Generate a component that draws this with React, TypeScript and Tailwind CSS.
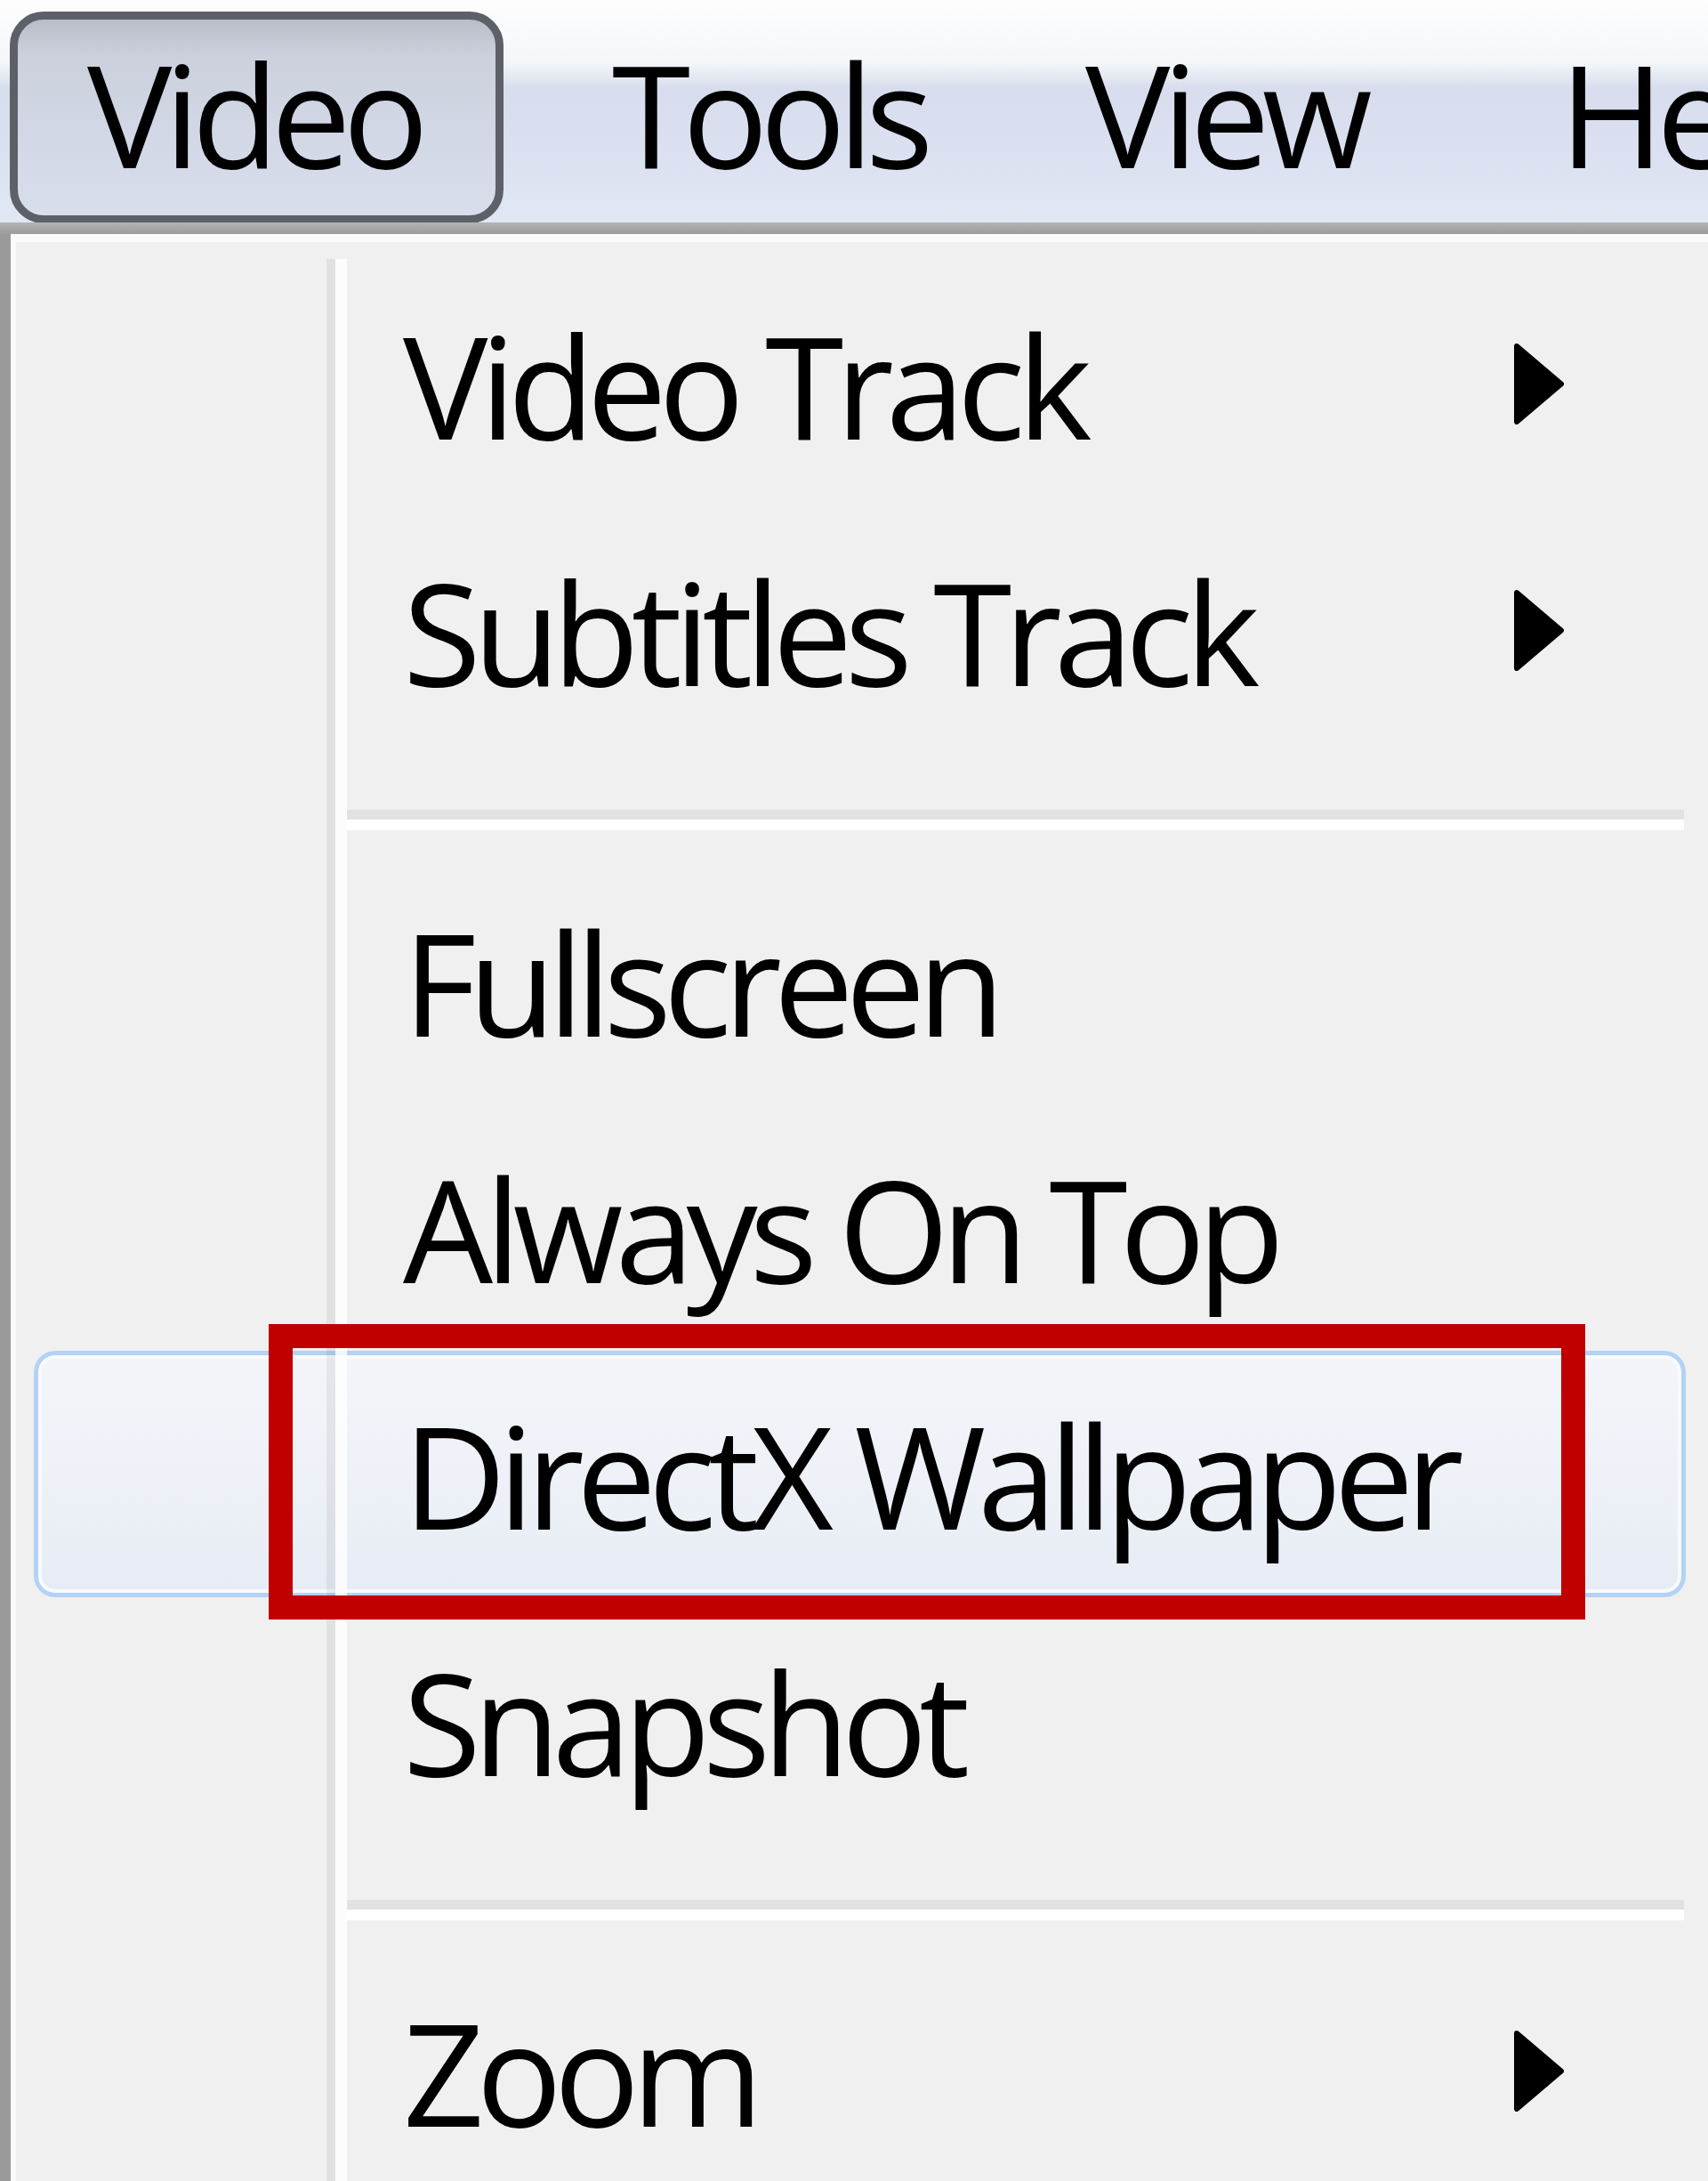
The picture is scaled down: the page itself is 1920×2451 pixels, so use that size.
import React from 'react';

const font = "font-['Open_Sans',sans-serif]";
const label = 'text-[160px] leading-none tracking-[-9px] text-black whitespace-nowrap';

const Arrow = () => (
  <svg width="56" height="91" viewBox="0 0 56 91" className="block">
    <path d="M3 3 L53 45.5 L3 88 Z" fill="#000" stroke="#000" strokeWidth="6" strokeLinejoin="round" />
  </svg>
);

const MenuRow = ({ text, submenu = false, active = false, marked = false }) => (
  <div
    className={`relative flex h-[277px] items-center pl-[415px] pr-[137px] ${
      active
        ? 'rounded-[24px] bg-[linear-gradient(to_bottom,#f3f5f9_0%,#eef1f7_50%,#e6ecf5_100%)] shadow-[inset_0_0_0_5px_#b3d2f5,inset_0_0_0_9px_#f8fafd]'
        : ''
    }`}
  >
    <span className={label}>{text}</span>
    {submenu && (
      <div className="ml-auto">
        <Arrow />
      </div>
    )}
    {marked && (
      <div className="absolute left-[264px] top-[-30px] z-20 h-[332px] w-[1480px] border-[27px] border-[#c00000]" />
    )}
  </div>
);

const Separator = () => (
  <div className="ml-[352px] mr-[2px] h-[117px] pt-[63px]">
    <div className="h-[11px] bg-[#e2e2e2]" />
    <div className="h-[12px] bg-white" />
  </div>
);

const BarItem = ({ text, width }) => (
  <div className={`mt-[13px] flex h-[238px] shrink-0 items-center pb-[10px] ${width}`}>
    <span className={label}>{text}</span>
  </div>
);

export default function App() {
  return (
    <div className={`h-[2451px] w-[1920px] overflow-hidden bg-[#f0f0f0] ${font}`}>
      {/* menu bar */}
      <div className="flex h-[250px] items-start overflow-hidden bg-[linear-gradient(to_bottom,#fefefe_0%,#f4f6fa_28%,#d7dded_40%,#dbe1f0_70%,#e2e7f4_100%)]">
        <div className="ml-[11px] mt-[13px] flex h-[238px] w-[555px] shrink-0 items-center rounded-[38px] border-[9px] border-[#5d6068] bg-[linear-gradient(to_bottom,#b9bdc7_0%,#cbd0dc_18%,#d1d6e4_50%,#d9deec_100%)] pb-[10px] pl-[78px]">
          <span className={label}>Video</span>
        </div>
        <div className="w-[122px] shrink-0" />
        <BarItem text="Tools" width="w-[532px]" />
        <BarItem text="View" width="w-[533px]" />
        <BarItem text="Help" width="w-[400px]" />
      </div>
      <div className="h-[13px] bg-[linear-gradient(to_bottom,#b4b4b4,#9c9c9c)]" />

      {/* dropdown */}
      <div className="relative h-full border-l-[12px] border-l-[#9a9a9a] bg-[#f0f0f0] pl-[26px] pr-[25px] pt-[30px] shadow-[inset_6px_9px_0_0_#fafafa]">
        <div className="absolute bottom-0 left-[355px] top-[28px] z-10 flex w-[23px]">
          <div className="w-[10px] bg-black/[0.06]" />
          <div className="w-[13px] bg-white/80" />
        </div>
        <MenuRow text="Video Track" submenu />
        <MenuRow text="Subtitles Track" submenu />
        <Separator />
        <MenuRow text="Fullscreen" />
        <MenuRow text="Always On Top" />
        <MenuRow text="DirectX Wallpaper" active marked />
        <MenuRow text="Snapshot" />
        <Separator />
        <MenuRow text="Zoom" submenu />
      </div>
    </div>
  );
}
